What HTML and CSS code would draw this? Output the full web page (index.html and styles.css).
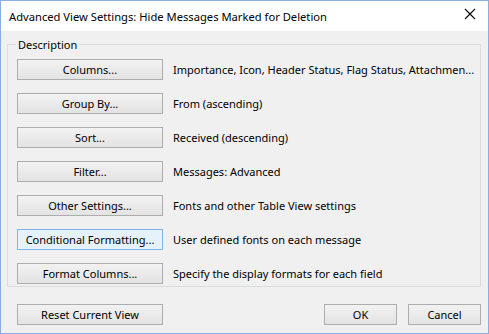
FILE: index.html
```html
<!DOCTYPE html>
<html>
<head>
<meta charset="utf-8">
<link rel="stylesheet" href="styles.css">
</head>
<body>
<div class="window">
  <div class="titlebar">
    <span class="title">Advanced View Settings: Hide Messages Marked for Deletion</span>
    <svg class="close" width="12" height="12" viewBox="0 0 12 12"><path d="M1 1 L11 11 M11 1 L1 11" stroke="#000" stroke-width="1.1" fill="none"/></svg>
  </div>
  <div class="body">
    <fieldset class="group">
      <legend>Description</legend>
      <div class="row"><button class="btn">Columns...</button><span class="desc">Importance, Icon, Header Status, Flag Status, Attachmen...</span></div>
      <div class="row"><button class="btn">Group By...</button><span class="desc">From (ascending)</span></div>
      <div class="row"><button class="btn">Sort...</button><span class="desc">Received (descending)</span></div>
      <div class="row"><button class="btn">Filter...</button><span class="desc">Messages: Advanced</span></div>
      <div class="row"><button class="btn">Other Settings...</button><span class="desc">Fonts and other Table View settings</span></div>
      <div class="row"><button class="btn focus">Conditional Formatting...</button><span class="desc">User defined fonts on each message</span></div>
      <div class="row"><button class="btn">Format Columns...</button><span class="desc">Specify the display formats for each field</span></div>
    </fieldset>
    <div class="footer">
      <button class="btn">Reset Current View</button>
      <div class="right">
        <button class="btn small">OK</button>
        <button class="btn small">Cancel</button>
      </div>
    </div>
  </div>
</div>
</body>
</html>
```
FILE: styles.css
```css
html, body {
  margin: 0;
  padding: 0;
}
body {
  font-family: "Noto Sans", "Open Sans", sans-serif;
  font-size: 11px;
  color: #000;
}
.window {
  width: 487px;
  height: 332px;
  border: 1px solid #8aaee0;
  background: #f0f0f0;
  display: flex;
  flex-direction: column;
}
.titlebar {
  height: 30px;
  flex-shrink: 0;
  background: #fff;
  display: flex;
  align-items: center;
  justify-content: space-between;
  padding: 0 12px 0 8px;
}
.title {
  font-size: 11.2px;
  color: #000;
  padding-top: 1px;
}
.close {
  margin-top: -5px;
}
.body {
  flex: 1;
  padding: 0 7px 0 6px;
  display: flex;
  flex-direction: column;
}
.group {
  margin: 6px 0 0 0;
  padding: 7px 0 2px 9px;
  border: 1px solid #dcdcdc;
  min-width: 0;
}
.group legend {
  padding: 0 2px;
  margin-left: -1px;
  font-size: 11px;
}
.row {
  display: flex;
  align-items: center;
  height: 21px;
  margin-bottom: 13px;
}
.row:last-child {
  margin-bottom: 0;
}
.btn {
  flex-shrink: 0;
  font-family: inherit;
  font-size: 11px;
  color: #000;
  width: 146px;
  height: 21px;
  border: 1px solid #adadad;
  background: linear-gradient(#f2f2f2, #e3e3e3);
  padding: 0;
  margin: 0;
  box-sizing: border-box;
}
.btn.focus {
  border-color: #7eb4ea;
  background: #e5f1fb;
}
.desc {
  margin-left: 10px;
  white-space: nowrap;
}
.footer {
  display: flex;
  justify-content: space-between;
  margin-top: 17px;
  padding-left: 10px;
}
.right {
  display: flex;
  gap: 11px;
}
.btn.small {
  width: 73px;
}
```
